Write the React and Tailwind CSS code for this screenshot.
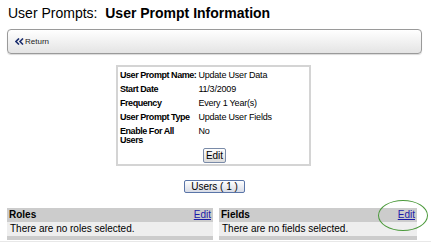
export default function App() {
  const rows = [
    ["User Prompt Name:", "Update User Data"],
    ["Start Date", "11/3/2009"],
    ["Frequency", "Every 1 Year(s)"],
    ["User Prompt Type", "Update User Fields"],
    ["Enable For All Users", "No"],
  ];

  return (
    <div className="relative w-[431px] h-[245px] bg-white overflow-hidden font-['Liberation_Sans',Arial,sans-serif] text-black">
      <div className="pl-[8px] pt-[5px] h-[22px] text-[14px] leading-[16px]">
        User Prompts:&nbsp;&nbsp;<span className="font-bold">User Prompt Information</span>
      </div>
      <div className="ml-[7px] mt-[7px] w-[415px] h-[25px] rounded-[4px] border border-[#9a9a9a] bg-gradient-to-b from-white to-[#e4e4e4] shadow-[0_1px_1px_rgba(0,0,0,0.15)] flex items-center pl-[7px]">
        <svg width="9" height="7" viewBox="0 0 9 7" className="mr-[1px]">
          <path d="M4 0.5 L1 3.5 L4 6.5 M8 0.5 L5 3.5 L8 6.5" fill="none" stroke="#1c2f6e" strokeWidth="1.6" />
        </svg>
        <span className="text-[8px] leading-[9px] text-[#222]">Return</span>
      </div>
      <div className="flex justify-center mt-[11px]">
        <div className="ml-[-4px] w-[195px] h-[101px] border-2 border-[#d4d4d4] pl-[2px] text-[9px] leading-[9px]">
          <table className="mt-[-1px] border-separate border-spacing-x-0 border-spacing-y-[5px]">
            <tbody>
              {rows.map(([label, value], i) => (
                <tr key={label}>
                  <td className={`font-bold w-[74px] pr-[2px] align-top tracking-[-0.45px] ${i < 4 ? "whitespace-nowrap" : ""}`}>{label}</td>
                  <td className="align-top whitespace-nowrap tracking-[-0.2px]">{value}</td>
                </tr>
              ))}
            </tbody>
          </table>
          <div className="flex justify-center mt-[-2px]">
            <button className="h-[15px] px-[2px] text-[10px] leading-[12px] border border-[#7a8ba8] rounded-[2px] bg-gradient-to-b from-white to-[#dcdcdc]">
              Edit
            </button>
          </div>
        </div>
      </div>
      <div className="flex justify-center mt-[14px]">
        <button className="ml-[-2px] h-[13px] px-[6px] text-[10px] leading-[11px] border border-[#5a75a8] rounded-[2px] bg-gradient-to-b from-white to-[#d8dce6] whitespace-nowrap">
          Users ( 1 )
        </button>
      </div>
      <div className="flex gap-[6px] ml-[7px] mt-[15px] text-[10px] leading-[12px]">
        {[
          ["Roles", "There are no roles selected."],
          ["Fields", "There are no fields selected."],
        ].map(([title, text], i) => (
          <div key={title} className={i === 0 ? "w-[206px]" : "w-[198px]"}>
            <div className="h-[14px] bg-[#cccccc] flex items-center justify-between px-[2px]">
              <span className="font-bold">{title}</span>
              <span className="text-[#1a1aa8] underline">Edit</span>
            </div>
            <div className="h-[14px] bg-[#eeeeee] flex items-center px-[3px]">{text}</div>
            <div className="h-[4px] bg-[#cccccc]" />
          </div>
        ))}
      </div>
      <div className="h-px bg-[#e8e8e8] mt-[1px]" />
      <div className="absolute left-[378px] top-[200px] w-[50px] h-[31px] rounded-[50%] border border-[#4c9a3c]" />
    </div>
  );
}
